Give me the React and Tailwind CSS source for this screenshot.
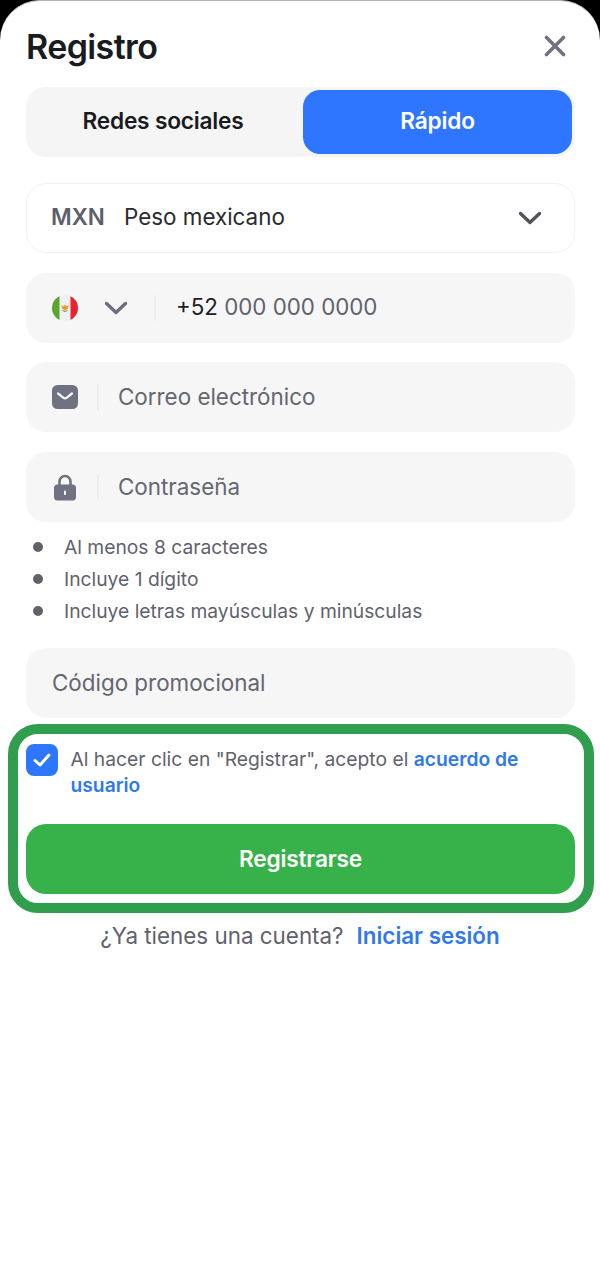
import React from "react";

const Field = ({ children, className = "" }) => (
  <div className={`h-[70px] rounded-[20px] bg-[#f6f6f7] flex items-center ${className}`}>{children}</div>
);

const Chevron = ({ className = "" }) => (
  <svg viewBox="0 0 24 14" className={className} fill="none" stroke="currentColor" strokeWidth="3.4" strokeLinecap="round" strokeLinejoin="round">
    <path d="M2.5 2.5 12 11.5 21.5 2.5" />
  </svg>
);

const Divider = () => <div className="w-[2px] h-[26px] bg-[#eceef0]" />;

const Flag = () => (
  <svg viewBox="0 0 26 26" className="w-[26px] h-[26px]">
    <defs>
      <clipPath id="flagclip"><circle cx="13" cy="13" r="13" /></clipPath>
    </defs>
    <g clipPath="url(#flagclip)">
      <rect width="26" height="26" fill="#eef0f2" />
      <rect width="7.5" height="26" fill="#5ba52f" />
      <rect x="18.5" width="7.5" height="26" fill="#e8222e" />
      <path d="M9.5 10 11.5 11.5 13 9.5 14.5 11.5 16.5 10 16 13.5 13 15.5 10 13.5Z" fill="#e89a2a" />
      <path d="M10.5 15.5Q13 17.5 15.5 15.5" stroke="#6a9a3a" strokeWidth="1" fill="none" />
    </g>
  </svg>
);

export default function App() {
  return (
    <div className="w-[600px] h-[1280px] bg-black overflow-hidden" style={{ fontFamily: "Inter, 'Noto Sans', sans-serif" }}>
      <div className="h-[1280px] bg-white rounded-t-[40px] border-t border-[#b5b8b6] flex flex-col">
        <div className="h-[86px] pl-[26px] pr-[34px] flex items-center justify-between pt-[5px]">
          <h1 className="text-[34px] leading-[40px] font-semibold text-[#1a1b1e] tracking-[-0.6px]">Registro</h1>
          <svg viewBox="0 0 22 22" className="w-[22px] h-[22px] text-[#70737f] -mt-[2px]" fill="none" stroke="currentColor" strokeWidth="3.6" strokeLinecap="round">
            <path d="M2.5 2.5 19.5 19.5M19.5 2.5 2.5 19.5" />
          </svg>
        </div>

        <div className="ml-[26px] mr-[25px] flex flex-col">
          <div className="h-[70px] rounded-[20px] bg-[#f5f5f5] p-[3px] flex items-stretch">
            <div className="w-[274px] flex items-center justify-center text-[22.7px] font-semibold text-[#1a1b1e] tracking-[-0.2px] -ml-[3px] pb-[1px]">Redes sociales</div>
            <div className="ml-[3px] flex-1 rounded-[17px] bg-[#2e76ff] flex items-center justify-center text-[22.7px] font-semibold text-white tracking-[-0.2px] pb-[1px]">Rápido</div>
          </div>

          <div className="mt-[26px] h-[70px] rounded-[20px] border border-[#f1f2f3] bg-white flex items-center pl-[24px] pr-[32px]">
            <span className="text-[22.4px] font-semibold text-[#5d606b] w-[73px] pb-[2px]">MXN</span>
            <span className="text-[22.4px] text-[#2a2b30] pb-[2px]">Peso mexicano</span>
            <Chevron className="ml-auto w-[24px] h-[16px] text-[#50535c]" />
          </div>

          <div className="mt-[20px] flex flex-col">
            <Field className="pl-[26px]">
              <Flag />
              <Chevron className="ml-[26px] w-[24px] h-[14px] text-[#6b6f7c]" />
              <div className="ml-[26px]"><Divider /></div>
              <span className="ml-[20px] text-[22.3px] text-[#1f2024] pb-[2px]">+52 <span className="text-[#5f626c]">000 000 0000</span></span>
            </Field>

            <Field className="pl-[26px] mt-[19px]">
              <svg viewBox="0 0 26 24" className="w-[26px] h-[24px]">
                <rect width="26" height="24" rx="5.5" fill="#6f7280" />
                <path d="M6 8.5C9 10.5 11 13.5 13 13.5C15 13.5 17 10.5 20 8.5" fill="none" stroke="#fff" strokeWidth="2.2" strokeLinecap="round" />
              </svg>
              <div className="ml-[19px]"><Divider /></div>
              <span className="ml-[19px] text-[22.4px] text-[#64676f]">Correo electrónico</span>
            </Field>

            <Field className="pl-[26px] mt-[20px]">
              <svg viewBox="0 0 26 28" className="w-[26px] h-[28px]">
                <path d="M7.5 13V8.5a5.5 5.5 0 0 1 11 0V13" fill="none" stroke="#6f7280" strokeWidth="2.6" />
                <rect x="2" y="11.5" width="22" height="16" rx="3.5" fill="#6f7280" />
                <rect x="12" y="17.5" width="2" height="4.5" rx="1" fill="#fff" />
              </svg>
              <div className="ml-[19px]"><Divider /></div>
              <span className="ml-[19px] text-[22.4px] text-[#64676f] pb-[1px]">Contraseña</span>
            </Field>
          </div>

          <ul className="mt-[9px] flex flex-col">
            {["Al menos 8 caracteres", "Incluye 1 dígito", "Incluye letras mayúsculas y minúsculas"].map((t) => (
              <li key={t} className="h-[32px] flex items-center text-[19.25px] text-[#5f626c]">
                <span className="ml-[7px] w-[10px] h-[10px] rounded-full bg-[#5f626c]" />
                <span className="ml-[21px]">{t}</span>
              </li>
            ))}
          </ul>

          <Field className="mt-[21px] pl-[26px]">
            <span className="text-[22.4px] text-[#64676f]">Código promocional</span>
          </Field>
        </div>

        <div className="mt-[6px] ml-[8px] w-[586px] h-[189px] rounded-[30px] border-[10px] border-[#309e4c] pl-[8px] pr-[9px] pt-[10px] flex flex-col">
          <div className="flex items-start h-[80px]">
            <div className="w-[32px] h-[32px] shrink-0 rounded-[8px] bg-[#2e76ff] flex items-center justify-center">
              <svg viewBox="0 0 18 14" className="w-[18px] h-[14px]" fill="none" stroke="#fff" strokeWidth="3" strokeLinecap="round" strokeLinejoin="round">
                <path d="M2 7.5 7 12 16 2" />
              </svg>
            </div>
            <p className="ml-[12.5px] text-[19.25px] leading-[26px] text-[#5f626c] pt-[2px]">
              Al hacer clic en "Registrar", acepto el <span className="font-semibold text-[#3079ea]">acuerdo de usuario</span>
            </p>
          </div>
          <div className="h-[70px] rounded-[20px] bg-[#37b24a] flex items-center justify-center text-[22.7px] font-semibold text-white tracking-[-0.2px]">Registrarse</div>
        </div>

        <div className="mt-[8px] h-[30px] flex items-center justify-center text-[22.4px]">
          <span className="text-[#5f626c]">¿Ya tienes una cuenta?</span>
          <span className="ml-[13px] font-semibold text-[#3079ea]">Iniciar sesión</span>
        </div>
      </div>
    </div>
  );
}
